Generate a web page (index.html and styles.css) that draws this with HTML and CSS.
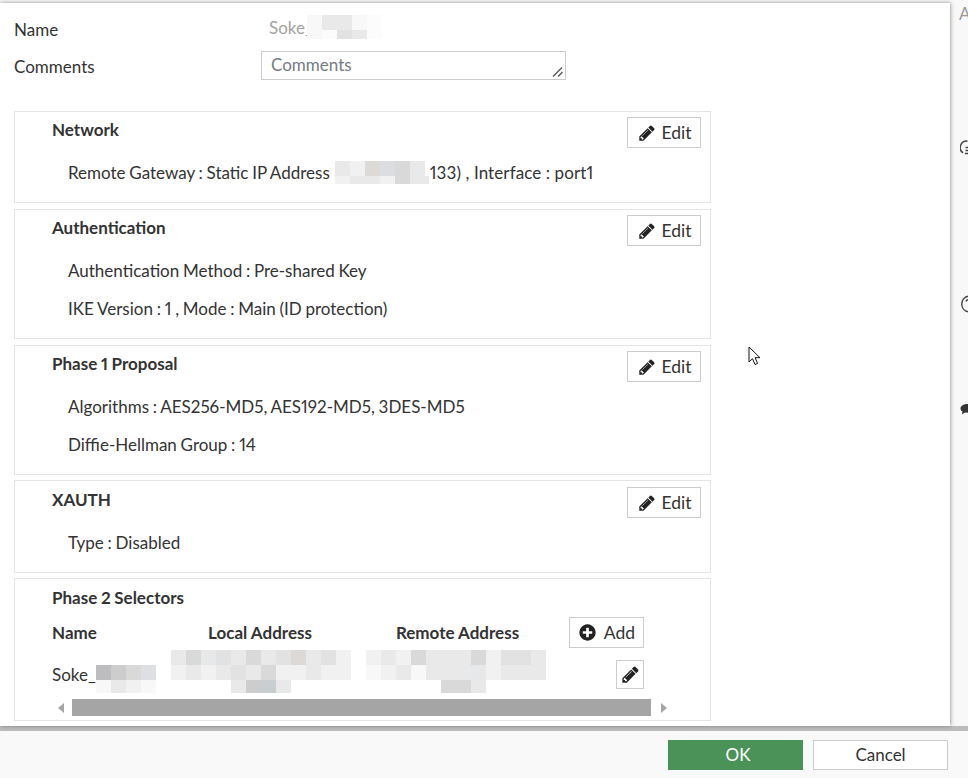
FILE: index.html
```html
<!DOCTYPE html>
<html lang="en">
<head>
<meta charset="utf-8">
<title>IPsec tunnel</title>
<link rel="stylesheet" href="styles.css">
</head>
<body>
<svg class="defs" aria-hidden="true">
  <symbol id="pencil" viewBox="0 0 1792 1792"><path d="M491 1536l91-91-235-235-91 91v107h128v128h107zm523-928q0-22-22-22-10 0-17 7l-542 542q-7 7-7 17 0 22 22 22 10 0 17-7l542-542q7-7 7-17zm-54-192l416 416-832 832h-416v-416zm683 96q0 53-37 90l-166 166-416-416 166-165q36-38 90-38 53 0 91 38l235 234q37 39 37 91z"/></symbol>
  <symbol id="plus" viewBox="0 0 1792 1792"><path d="M1344 960v-128q0-26-19-45t-45-19h-256v-256q0-26-19-45t-45-19h-128q-26 0-45 19t-19 45v256h-256q-26 0-45 19t-19 45v128q0 26 19 45t45 19h256v256q0 26 19 45t45 19h128q26 0 45-19t19-45v-256h256q26 0 45-19t19-45zm320-64q0 209-103 385.500t-279.500 279.500-385.500 103-385.500-103-279.500-279.500-103-385.500 103-385.500 279.500-279.500 385.500-103 385.500 103 279.500 279.500 103 385.500z"/></symbol>
</svg>
<div class="screen">
  <div class="upper">
    <main class="panel">
      <div class="field name-field">
        <span class="label">Name</span>
        <span class="value">Soke_</span>
        <span class="mosaic m-name">
          <span class="mrow r15"><i class="c1"></i><i class="c3"></i><i class="c3"></i><i class="c1"></i><i class="c0"></i></span>
          <span class="mrow r9"><i class="c1"></i><i class="c0"></i><i class="c4"></i><i class="c3"></i><i class="c0"></i></span>
        </span>
      </div>
      <div class="field comment-field">
        <span class="label">Comments</span>
        <div class="textarea">
          <span class="placeholder">Comments</span>
          <svg class="grip" viewBox="0 0 12 12"><path d="M1 10.500 10 1.500M6 10.500 10.500 6" fill="none" stroke="#555" stroke-width="1.300"/></svg>
        </div>
      </div>

      <section class="card card-network">
        <div class="card-head"><h2>Network</h2><button class="btn edit"><svg class="ico"><use href="#pencil"/></svg>Edit</button></div>
        <p class="line line-net"><span>Remote Gateway : Static IP Address</span><span class="mosaic m-ip">
            <span class="mrow r15"><i class="c3"></i><i class="c2"></i><i class="c5w"></i><i class="c5b"></i><i class="c5"></i><i class="c3"></i></span>
            <span class="mrow r8"><i class="c2"></i><i class="c3"></i><i class="c3"></i><i class="c2"></i><i class="c5"></i><i class="c3 wide"></i></span>
          </span><span class="after">133) , Interface : port1</span></p>
      </section>

      <section class="card card-auth">
        <div class="card-head"><h2>Authentication</h2><button class="btn edit"><svg class="ico"><use href="#pencil"/></svg>Edit</button></div>
        <p class="line">Authentication Method : Pre-shared Key</p>
        <p class="line">IKE Version : 1 , Mode : Main (ID protection)</p>
      </section>

      <section class="card card-auth">
        <div class="card-head"><h2>Phase 1 Proposal</h2><button class="btn edit"><svg class="ico"><use href="#pencil"/></svg>Edit</button></div>
        <p class="line">Algorithms : AES256-MD5, AES192-MD5, 3DES-MD5</p>
        <p class="line">Diffie-Hellman Group : 14</p>
      </section>

      <section class="card card-xauth">
        <div class="card-head"><h2>XAUTH</h2><button class="btn edit"><svg class="ico"><use href="#pencil"/></svg>Edit</button></div>
        <p class="line">Type : Disabled</p>
      </section>

      <section class="card card-p2">
        <h2 class="p2-title">Phase 2 Selectors</h2>
        <div class="p2-grid">
          <span class="th">Name</span>
          <span class="th center local-h">Local Address</span>
          <span class="th center remote-h">Remote Address</span>
          <button class="btn add"><svg class="ico plus"><use href="#plus"/></svg>Add</button>

          <div class="cell-name">
            <span>Soke_</span>
            <span class="mosaic m-soke">
              <span class="mrow r15"><i class="c7"></i><i class="c6"></i><i class="c5"></i><i class="c4b"></i></span>
              <span class="mrow r13"><i class="c1"></i><i class="c3"></i><i class="c2"></i><i class="c1"></i></span>
            </span>
          </div>
          <span class="mosaic m-addr">
            <span class="mrow r15"><i class="c3"></i><i class="c5"></i><i class="c3b"></i><i class="c4"></i><i class="c3"></i><i class="c5"></i><i class="c3"></i><i class="c4"></i><i class="c5w"></i><i class="c3"></i><i class="c4"></i><i class="c2"></i></span>
            <span class="mrow r15"><i class="c2"></i><i class="c3"></i><i class="c2"></i><i class="c3"></i><i class="c4"></i><i class="c3"></i><i class="c5"></i><i class="c2"></i><i class="c2"></i><i class="c3"></i><i class="c2"></i><i class="c2"></i></span>
            <span class="mrow r13"><i class="gap4"></i><i class="c3"></i><i class="c6"></i><i class="c6b"></i><i class="c3"></i></span>
          </span>
          <span class="mosaic m-addr">
            <span class="mrow r15"><i class="c2"></i><i class="c3"></i><i class="c2"></i><i class="c5"></i><i class="c3"></i><i class="c3"></i><i class="c3"></i><i class="c5"></i><i class="c2"></i><i class="c4"></i><i class="c4"></i><i class="c3"></i></span>
            <span class="mrow r15"><i class="c1"></i><i class="c2"></i><i class="c3"></i><i class="c1"></i><i class="c3"></i><i class="c3"></i><i class="c3"></i><i class="c3b"></i><i class="c2"></i><i class="c3"></i><i class="c3"></i><i class="c3"></i></span>
            <span class="mrow r13"><i class="gap5"></i><i class="c5"></i><i class="c5"></i><i class="c3"></i></span>
          </span>
          <div class="cell-action"><button class="btn small"><svg class="ico"><use href="#pencil"/></svg></button></div>
        </div>
        <div class="hscroll">
          <span class="arrow left"></span>
          <span class="thumb"></span>
          <span class="arrow right"></span>
        </div>
      </section>
    </main>
    <aside class="side">
      <span class="side-a">A</span>
      <svg class="side-icon i1" viewBox="0 0 8 16"><path d="M7.500 1.200A6.400 6.400 0 0 0 3 12.800" fill="none" stroke="#444" stroke-width="1.500"/><path d="M5.500 7.500h2.500M5.500 10.500h2.500M5 13.500h3" fill="none" stroke="#444" stroke-width="1.500"/></svg>
      <svg class="side-icon i2" viewBox="0 0 8 18"><path d="M8 1.200A8 8 0 0 0 8 16.800" fill="none" stroke="#444" stroke-width="1.400"/><path d="M6 6.500Q6.500 4.800 8 4.800" fill="none" stroke="#444" stroke-width="1.400"/></svg>
      <svg class="side-icon i3" viewBox="0 0 8 14"><path d="M8 1C3.500 1 .5 3 .5 5.500.5 7 1.500 8 2.500 8.700L1.800 11.500 5 9.500 8 9.800Z" fill="#333"/></svg>
    </aside>
  </div>
  <div class="strip"></div>
  <footer class="footer">
    <button class="fbtn ok">OK</button>
    <button class="fbtn cancel">Cancel</button>
  </footer>
</div>
<svg class="cursor" viewBox="0 0 14 20"><path d="M1 1v15l3.500-3.300 2.500 5.800 2.600-1.100-2.500-5.700H12Z" fill="#fff" stroke="#111" stroke-width="1"/></svg>
</body>
</html>
```
FILE: styles.css
```css
* { box-sizing: border-box; }
html, body { margin: 0; padding: 0; }
body {
  width: 968px;
  height: 778px;
  overflow: hidden;
  font-family: "Lato", "Liberation Sans", sans-serif;
  font-size: 17px;
  font-variant-numeric: proportional-nums;
  color: #333;
  background: #f8f8f8;
  position: relative;
}
.defs { display: none; }
.screen { display: flex; flex-direction: column; height: 778px; }
.upper { display: flex; height: 726px; padding-top: 3px; }
.panel {
  width: 950px;
  height: 723px;
  background: #fff;
  padding: 0 0 0 14px;
  box-shadow: 1px 0 4px rgba(0,0,0,.28), 0 -1px 3px rgba(0,0,0,.12);
  position: relative;
  overflow: hidden;
}
.side { flex: 1; position: relative; overflow: hidden; }
.side-a { position: absolute; left: 9px; top: 2px; color: #999; font-size: 17px; line-height: 18px; }
.side-icon { position: absolute; left: 10px; width: 8px; }
.i1 { top: 137px; height: 16px; }
.i2 { top: 292px; height: 18px; }
.i3 { top: 400px; height: 14px; }

.field { display: flex; align-items: center; }
.label { width: 247px; flex: none; }
.name-field { height: 24px; margin-top: 12px; }
.name-field .label { position: relative; top: 2px; }
.value { margin-left: 8px; color: #a3a3a3; }
.comment-field { margin-top: 12px; height: 29px; }
.comment-field .label { position: relative; top: 1px; }
.textarea {
  width: 305px;
  height: 29px;
  border: 1px solid #ccc;
  background: #fff;
  padding: 3px 9px 0;
  line-height: 20px;
  position: relative;
  color: #757b84;
}
.grip { position: absolute; right: 1px; bottom: 1px; width: 12px; height: 12px; }

.mosaic { display: inline-flex; flex-direction: column; vertical-align: top; }
.mrow { display: flex; }
.mrow i { display: block; width: 15px; height: 100%; flex: none; }
.r15 { height: 15px; }
.r13 { height: 13px; }
.r9 { height: 9px; }
.r8 { height: 8px; }
.c0 { background: #fcfcfc; }
.c1 { background: #f8f8f8; }
.c2 { background: #f1f1f1; }
.c3 { background: #e9e9e9; }
.c3b { background: #e7e8ea; }
.c4 { background: #e2e2e2; }
.c4b { background: #dedfe2; }
.c5 { background: #d9d9d9; }
.c5w { background: #dcd9d6; }
.c5b { background: #dcdde1; }
.c6 { background: #cdcdcd; }
.c6b { background: #c9ced0; }
.c7 { background: #bdbdbf; }
.mrow i.wide { width: 19px; }
.mrow i.gap4 { width: 60px; }
.mrow i.gap5 { width: 75px; }
.m-name { margin-left: -6px; align-self: flex-start; }

.card {
  width: 697px;
  border: 1px solid #e4e4e4;
  background: #fff;
  margin-bottom: 6px;
  padding: 5px 9px 0 37px;
}
.card-network { margin-top: 31px; height: 92px; }
.card-auth { height: 130px; }
.card-xauth { height: 93px; margin-bottom: 5px; padding-top: 6px; }
.card-auth + .card-xauth { margin-top: -1px; }
.card-p2 { height: 143px; padding: 0 9px 0 37px; position: relative; }
.card-head { display: flex; justify-content: space-between; align-items: flex-start; height: 31px; }
h2 { margin: 0; padding-top: 1px; font-size: 17px; font-weight: 700; line-height: 24px; color: #333; word-spacing: -.5px; }
.line { margin: 0 0 0 16px; line-height: 24px; height: 38px; word-spacing: -.6px; }
.card-head + .line { margin-top: 13px; }
.line-net { display: flex; align-items: flex-start; white-space: nowrap; }
.m-ip { margin: 0 1px 0 5px; }
.after { word-spacing: 0; letter-spacing: .1px; }

.btn {
  display: inline-flex;
  align-items: center;
  justify-content: center;
  font: inherit;
  color: #333;
  background: #fff;
  border: 1px solid #ccc;
  padding: 0;
  font-size: 17.500px;
}
.edit { width: 74px; height: 31px; }
.add { width: 75px; height: 31px; }
.small { width: 28px; height: 29px; }
.ico { width: 18px; height: 18px; fill: #222; margin: 0 5px 0 2px; flex: none; }
.small .ico { margin: 0; width: 19px; height: 19px; }
.ico.plus { width: 19px; height: 19px; margin: 0 7px 0 0; }

.p2-title { padding-top: 7px; }
.p2-grid {
  display: grid;
  grid-template-columns: 119px 195px 203px 75px;
  grid-template-rows: 33px 43px;
  margin-top: 7px;
}
.th { font-weight: 700; align-self: center; line-height: 20px; padding-bottom: 2px; }
.center { width: 180px; text-align: center; }
.local-h { padding-right: 2px; }
.remote-h { padding-left: 3px; }
.cell-name { display: flex; align-items: flex-start; }
.cell-name > span:first-child { margin-top: 15px; line-height: 20px; }
.m-soke { margin-left: 0; margin-top: 15px; }
.cell-action { display: flex; justify-content: flex-end; padding-top: 10px; }

.hscroll { display: flex; align-items: center; height: 17px; margin: 6px 0 0 6px; width: 618px; }
.thumb { width: 579px; height: 17px; background: #a5a5a5; }
.arrow { width: 0; height: 0; border-top: 5px solid transparent; border-bottom: 5px solid transparent; }
.arrow.left { border-right: 6px solid #a5a5a5; margin: 0 8px 0 0; }
.arrow.right { border-left: 6px solid #a5a5a5; margin-left: 10px; }

.strip { height: 5px; background: #bcbcbc; }
.footer {
  flex: 1;
  background: #f9f9f9;
  display: flex;
  justify-content: flex-end;
  gap: 10px;
  padding: 9px 20px 0 0;
}
.fbtn { width: 135px; height: 30px; font: inherit; font-size: 17px; border: 1px solid #ccc; padding: 0 0 2px; }
.ok { background: #4b9259; border-color: #4b9259; color: #fff; padding-left: 5px; }
.cancel { background: #fff; color: #333; }

.cursor { position: absolute; left: 748px; top: 346px; width: 14px; height: 20px; }
```
